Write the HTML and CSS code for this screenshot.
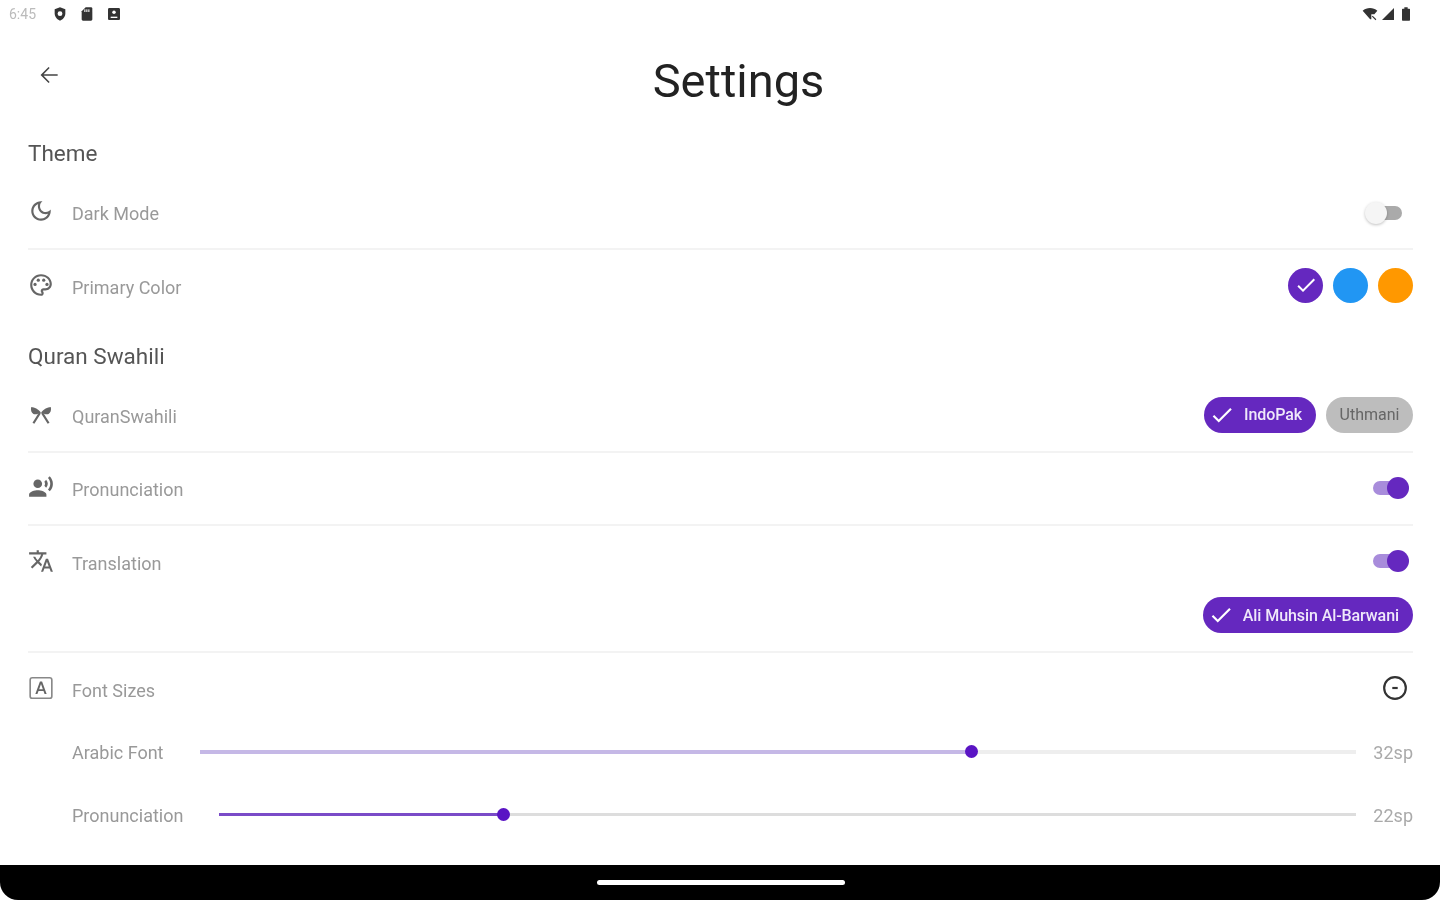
FILE: index.html
```html
<!DOCTYPE html>
<html lang="en">
<head>
  <meta charset="UTF-8" />
  <title>Settings</title>
  <link rel="stylesheet" href="styles.css">
</head>
<body>
  <div class="status-bar">
    <div class="status-left">
      <span class="clock">6:45</span>
      <svg class="status-icon" viewBox="0 0 24 24"><path d="M12 2l8 3v6c0 5-3.400 9.400-8 11-4.600-1.600-8-6-8-11V5z"/><circle cx="12" cy="11.500" r="3.600" fill="#fff"/></svg>
      <svg class="status-icon" viewBox="0 0 24 24"><path d="M10 2h8c1.100 0 2 .9 2 2v16c0 1.100-.9 2-2 2H6c-1.100 0-2-.9-2-2V8z"/><rect x="8" y="5" width="1.600" height="4" fill="#fff"/><rect x="11" y="5" width="1.600" height="4" fill="#fff"/><rect x="14" y="5" width="1.600" height="4" fill="#fff"/></svg>
      <svg class="status-icon" viewBox="0 0 24 24"><path d="M5 3h14c1.100 0 2 .9 2 2v14c0 1.100-.9 2-2 2H5c-1.100 0-2-.9-2-2V5c0-1.100.9-2 2-2z"/><circle cx="12" cy="9.500" r="2.600" fill="#fff"/><path d="M7 16h10v2H7z" fill="#fff"/></svg>
    </div>
    <div class="status-right">
      <svg class="status-icon" viewBox="0 0 24 24"><path d="M1 7c6-5.300 16-5.300 22 0l-4.500 5.500H14V20h-1.800z"/><path d="M16 14.500l5.500 5.500-1.200 1.200-5.500-5.500z"/></svg>
      <svg class="status-icon" viewBox="0 0 24 24"><path d="M21 3v18H3z"/></svg>
      <svg class="status-icon" viewBox="0 0 24 24"><path d="M9.500 2h5v2H17c.6 0 1 .4 1 1v16c0 .6-.4 1-1 1H7c-.6 0-1-.4-1-1V5c0-.6.4-1 1-1h2.500z"/></svg>
    </div>
  </div>

  <main class="content">
    <header class="top-bar">
      <svg class="back" viewBox="0 0 24 24"><path d="M20 11.200H7l5.600-5.600L11.600 4.600 4.200 12l7.400 7.400 1-1L7 12.800h13z"/></svg>
      <h1>Settings</h1>
    </header>

    <div class="settings">
      <h2>Theme</h2>
      <div class="row line">
        <svg class="icon" viewBox="0 0 24 24"><path d="M9.370 5.510c-.18.64-.27 1.310-.27 1.990 0 4.080 3.320 7.400 7.400 7.400.68 0 1.350-.09 1.990-.27C17.450 17.190 14.930 19 12 19c-3.860 0-7-3.140-7-7 0-2.930 1.810-5.450 4.370-6.490zM12 3c-4.970 0-9 4.030-9 9s4.030 9 9 9 9-4.030 9-9c0-.46-.04-.92-.1-1.360-.98 1.370-2.580 2.260-4.400 2.260-2.980 0-5.400-2.420-5.400-5.400 0-1.810.89-3.420 2.260-4.400-.44-.06-.9-.1-1.360-.1z"/></svg>
        <span class="label">Dark Mode</span>
        <span class="switch"><span class="track"></span><span class="thumb"></span></span>
      </div>
      <div class="row">
        <svg class="icon" viewBox="0 0 24 24"><path d="M12 22C6.490 22 2 17.510 2 12S6.490 2 12 2s10 4.040 10 9c0 3.310-2.690 6-6 6h-1.770c-.28 0-.5.22-.5.5 0 .12.05.23.13.33.41.47.64 1.060.64 1.670 0 1.380-1.120 2.500-2.500 2.500zm0-18c-4.410 0-8 3.590-8 8s3.590 8 8 8c.28 0 .5-.22.5-.5 0-.16-.08-.28-.14-.35-.41-.46-.63-1.050-.63-1.650 0-1.380 1.120-2.500 2.500-2.500H16c2.210 0 4-1.790 4-4 0-3.860-3.590-7-8-7z"/><circle cx="6.500" cy="11.500" r="1.500"/><circle cx="9.500" cy="7.500" r="1.500"/><circle cx="14.500" cy="7.500" r="1.500"/><circle cx="17.500" cy="11.500" r="1.500"/></svg>
        <span class="label">Primary Color</span>
        <div class="colors">
          <span class="dot purple"><svg viewBox="0 0 24 24"><path d="M9 16.170L4.830 12l-1.420 1.410L9 19 21 7l-1.410-1.410z"/></svg></span>
          <span class="dot blue"></span>
          <span class="dot orange"></span>
        </div>
      </div>

      <h2 class="second">Quran Swahili</h2>
      <div class="row line">
        <svg class="icon" viewBox="0 0 24 24"><path d="M12 10.500C9.500 7.500 6 5.500 3 5.500c-.8 2.500.2 5.500 2 6.500 2 .5 5-.2 7-1.500zm0 0c2.500-3 6-5 9-5 .8 2.500-.2 5.500-2 6.500-2 .5-5-.2-7-1.500z"/><path class="bow" d="M11 11L5 20.500M13 11L19 20.500"/></svg>
        <span class="label">QuranSwahili</span>
        <div class="chips">
          <span class="chip on"><svg viewBox="0 0 24 24"><path d="M9 16.170L4.830 12l-1.420 1.410L9 19 21 7l-1.410-1.410z"/></svg>IndoPak</span>
          <span class="chip off">Uthmani</span>
        </div>
      </div>
      <div class="row line">
        <svg class="icon" viewBox="0 0 24 24"><circle cx="9" cy="9" r="4"/><path d="M9 15c-2.670 0-8 1.340-8 4v2h16v-2c0-2.660-5.330-4-8-4zm7.760-9.640l-1.680 1.690c.84 1.180.84 2.710 0 3.890l1.680 1.690c2.020-2.020 2.020-5.070 0-7.270zM20.070 2l-1.630 1.630c2.770 3.020 2.770 7.560 0 10.740L20.070 16c3.900-3.890 3.910-9.950 0-14z"/></svg>
        <span class="label">Pronunciation</span>
        <span class="switch checked"><span class="track"></span><span class="thumb"></span></span>
      </div>
      <div class="translation line">
        <div class="row">
          <svg class="icon" viewBox="0 0 24 24"><path d="M12.870 15.070l-2.540-2.510.03-.03c1.740-1.940 2.980-4.170 3.710-6.530H17V4h-7V2H8v2H1v1.990h11.170C11.500 7.920 10.440 9.750 9 11.350 8.070 10.320 7.300 9.190 6.690 8h-2c.73 1.630 1.730 3.170 2.980 4.560l-5.090 5.020L4 19l5-5 3.110 3.110.76-2.040zM18.500 10h-2L12 22h2l1.120-3h4.750L21 22h2l-4.500-12zm-2.620 7l1.620-4.330L19.120 17h-3.240z"/></svg>
          <span class="label">Translation</span>
          <span class="switch checked"><span class="track"></span><span class="thumb"></span></span>
        </div>
        <div class="chips end">
          <span class="chip on"><svg viewBox="0 0 24 24"><path d="M9 16.170L4.830 12l-1.420 1.410L9 19 21 7l-1.410-1.410z"/></svg>Ali Muhsin Al-Barwani</span>
        </div>
      </div>
      <div class="row">
        <svg class="icon" viewBox="0 0 24 24"><rect class="box" x="2" y="2.500" width="20" height="19" rx="2"/><path d="M11 6h2l4.200 11.500h-1.900l-1-2.800H9.700l-1 2.800H6.800zm-.7 7.100h3.400L12 8.300z"/></svg>
        <span class="label">Font Sizes</span>
        <svg class="collapse" viewBox="0 0 24 24"><circle cx="12" cy="12" r="10"/><path d="M9.500 12h5"/></svg>
      </div>
      <div class="slider-row first">
        <span class="label">Arabic Font</span>
        <div class="slider soft"><span class="fill" style="width:66.7%"></span><span class="knob" style="left:66.7%"></span></div>
        <span class="value">32sp</span>
      </div>
      <div class="slider-row">
        <span class="label">Pronunciation</span>
        <div class="slider"><span class="fill" style="width:25%"></span><span class="knob" style="left:25%"></span></div>
        <span class="value">22sp</span>
      </div>
    </div>
  </main>

  <nav class="nav-bar"><span class="home"></span></nav>
</body>
</html>
```

FILE: styles.css
```css
* {
  box-sizing: border-box;
}
html, body {
  height: 100%;
}
body {
  font-family: Roboto, "Liberation Sans", sans-serif;
  background: #fff;
  margin: 0;
  display: flex;
  flex-direction: column;
  overflow: hidden;
  filter: blur(0.5px);
}

/* status bar */
.status-bar {
  height: 28px;
  padding: 0 27px 0 9px;
  display: flex;
  justify-content: space-between;
  align-items: center;
}
.status-left, .status-right {
  display: flex;
  align-items: center;
}
.status-left {
  gap: 11px;
}
.status-right {
  gap: 2px;
  margin-right: -1px;
}
.clock {
  font-size: 14px;
  color: #bbb;
  width: 32px;
}
.status-icon {
  width: 16px;
  height: 16px;
  fill: #333;
}

.content {
  flex: 1;
  padding: 0 27px 0 28px;
}
.top-bar {
  height: 102px;
  position: relative;
  display: flex;
  justify-content: center;
  padding: 24px 0 0 36px;
}
.back {
  position: absolute;
  left: 8px;
  top: 34px;
  width: 26px;
  height: 26px;
  fill: #444;
}
h1 {
  margin: 0;
  font-size: 47px;
  font-weight: 400;
  line-height: 58px;
  color: #222;
}

h2 {
  margin: 0;
  height: 47px;
  font-size: 22.500px;
  font-weight: 400;
  line-height: 47px;
  color: #555;
}
h2.second {
  margin-top: 11px;
}

.row {
  height: 72px;
  display: flex;
  align-items: center;
  gap: 18px;
}
.line {
  border-bottom: 2px solid #f3f3f3;
  height: 73px;
}
.translation {
  height: 127px;
}
.icon {
  width: 26px;
  height: 26px;
  flex: none;
  fill: #666;
  margin-top: -3px;
}
.bow {
  fill: none;
  stroke: #666;
  stroke-width: 2;
}
.box {
  fill: none;
  stroke: #888;
  stroke-width: 1.500;
}
.label {
  font-size: 18px;
  color: #999;
  flex: 1;
  padding-top: 2px;
}

/* switches */
.switch {
  position: relative;
  width: 44px;
  height: 26px;
  margin-right: 4px;
  margin-top: 1px;
}
.switch.checked {
  margin-top: -2px;
}
.track {
  position: absolute;
  left: 8px;
  right: 7px;
  top: 6px;
  height: 14px;
  border-radius: 7px;
  background: #aaa;
}
.thumb {
  position: absolute;
  left: 0;
  top: 2px;
  width: 22px;
  height: 22px;
  border-radius: 50%;
  background: #f5f5f5;
  box-shadow: 0 1px 3px rgba(0,0,0,0.25);
}
.checked .track {
  background: #a88cdb;
}
.checked .thumb {
  left: 22px;
  background: #6528bf;
  box-shadow: none;
}

/* colour dots */
.colors {
  display: flex;
  gap: 10px;
  margin-top: -2px;
}
.dot {
  width: 35px;
  height: 35px;
  border-radius: 50%;
  display: flex;
  align-items: center;
  justify-content: center;
}
.dot svg {
  width: 24px;
  height: 24px;
  fill: #fff;
}
.purple { background: #6528bf; }
.blue { background: #2196f3; }
.orange { background: #ff9800; }

/* chips */
.chips {
  display: flex;
  gap: 10px;
  margin-top: -2px;
}
.chips.end {
  justify-content: flex-end;
  margin-top: -1px;
}
.chip {
  height: 36px;
  border-radius: 18px;
  display: flex;
  align-items: center;
  font-size: 16px;
  padding: 0 14px;
}
.chip svg {
  width: 26px;
  height: 26px;
  fill: #fff;
  margin: 0 9px 0 -9px;
}
.chip.on {
  background: #6528bf;
  color: #efe8fa;
  font-weight: 500;
  letter-spacing: -0.08px;
}
.chip.off {
  background: #bdbdbd;
  color: #666;
  padding: 0 13.500px;
}

/* font size sliders */
.collapse {
  width: 26px;
  height: 26px;
  margin-right: 5px;
  margin-top: -3px;
  fill: none;
  stroke: #333;
  stroke-width: 2;
}
.slider-row {
  height: 63px;
  padding-left: 44px;
  display: flex;
  align-items: center;
}
.slider-row.first {
  margin-top: -4px;
}
.slider-row .label {
  flex: none;
  margin-right: 36px;
  padding-top: 0;
  margin-top: -1px;
}
.slider {
  flex: 1;
  height: 3px;
  background: #ddd;
  position: relative;
  margin-top: -2px;
}
.slider.soft {
  height: 4px;
  background: #eee;
}
.fill {
  position: absolute;
  left: 0;
  top: 0;
  bottom: 0;
  background: #7a4bc8;
}
.soft .fill {
  background: #c5b8e6;
}
.knob {
  position: absolute;
  top: 50%;
  width: 13px;
  height: 13px;
  margin: -6.500px 0 0 -6.500px;
  border-radius: 50%;
  background: #5a14c4;
}
.value {
  font-size: 18px;
  color: #aaa;
  margin-left: 17px;
  margin-top: -1px;
}

/* bottom nav */
.nav-bar {
  height: 35px;
  background: #000;
  border-radius: 0 0 18px 18px;
  display: flex;
  justify-content: center;
  padding: 15px 0 0 2px;
}
.home {
  width: 248px;
  height: 5px;
  border-radius: 3px;
  background: #fff;
}
```
